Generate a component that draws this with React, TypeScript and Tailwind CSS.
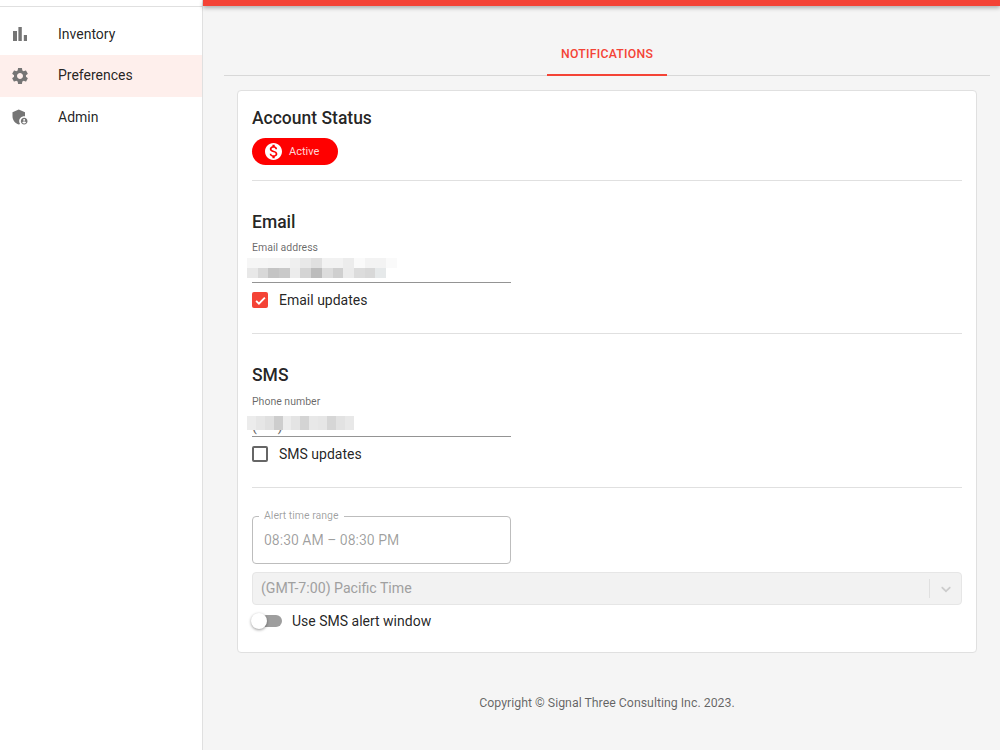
const gear = "M19.14 12.94c.04-.3.06-.61.06-.94 0-.32-.02-.64-.07-.94l2.03-1.58c.18-.14.23-.41.12-.61l-1.92-3.32c-.12-.22-.37-.29-.59-.22l-2.39.96c-.5-.38-1.03-.7-1.62-.94l-.36-2.54c-.04-.24-.24-.41-.48-.41h-3.84c-.24 0-.43.17-.47.41l-.36 2.54c-.59.24-1.13.57-1.62.94l-2.39-.96c-.22-.08-.47 0-.59.22L2.74 8.87c-.12.21-.08.47.12.61l2.03 1.58c-.05.3-.09.63-.09.94s.02.64.07.94l-2.03 1.58c-.18.14-.23.41-.12.61l1.92 3.32c.12.22.37.29.59.22l2.39-.96c.5.38 1.03.7 1.62.94l.36 2.54c.05.24.24.41.48.41h3.84c.24 0 .44-.17.47-.41l.36-2.54c.59-.24 1.13-.56 1.62-.94l2.39.96c.22.08.47 0 .59-.22l1.92-3.32c.12-.22.07-.47-.12-.61l-2.01-1.58zM12 15.6c-1.98 0-3.6-1.62-3.6-3.6s1.62-3.6 3.6-3.6 3.6 1.62 3.6 3.6-1.62 3.6-3.6 3.6z";
const chart = "M5 9h4v10H5zM10.4 5h3.4v14h-3.4zm5.4 8H19v6h-3.2z";
const admin = "M17 11c.34 0 .67.04 1 .09V6.27L10.5 3 3 6.27v4.91c0 4.54 3.2 8.79 7.5 9.82.55-.13 1.08-.32 1.6-.55-.69-.98-1.1-2.17-1.1-3.45 0-3.31 2.69-6 6-6zM17 13c-2.21 0-4 1.79-4 4s1.79 4 4 4 4-1.79 4-4-1.79-4-4-4zm0 1.38c.62 0 1.12.51 1.12 1.12s-.51 1.12-1.12 1.12-1.12-.51-1.12-1.12.5-1.12 1.12-1.12zm0 5.37c-.93 0-1.74-.46-2.24-1.17.05-.72 1.51-1.08 2.24-1.08s2.19.36 2.24 1.08c-.5.71-1.31 1.17-2.24 1.17z";
const money = "M12 2C6.48 2 2 6.48 2 12s4.48 10 10 10 10-4.48 10-10S17.52 2 12 2zm1.41 16.09V20h-2.67v-1.93c-1.71-.36-3.16-1.46-3.27-3.4h1.96c.1 1.05.82 1.87 2.65 1.87 1.96 0 2.4-.98 2.4-1.59 0-.83-.44-1.61-2.67-2.14-2.48-.6-4.18-1.62-4.18-3.67 0-1.72 1.39-2.84 3.11-3.21V4h2.67v1.95c1.86.45 2.79 1.86 2.85 3.39H14.3c-.05-1.11-.64-1.87-2.22-1.87-1.5 0-2.4.68-2.4 1.64 0 .84.65 1.39 2.67 1.91s4.18 1.39 4.18 3.91c-.01 1.83-1.38 2.83-3.12 3.16z";

function NavItem({ d, label, active, size }: { d: string; label: string; active?: boolean; size: string }) {
  return (
    <div className={`flex h-[41.6px] items-center pl-[8px] ${active ? "bg-[#feefec]" : ""}`}>
      <span className="flex h-[24px] w-[24px] items-center justify-center">
        <svg viewBox="0 0 24 24" className={`${size} fill-[#757575]`}><path d={d} /></svg>
      </span>
      <span className="ml-[26px] text-[14px] text-[rgba(0,0,0,0.87)]">{label}</span>
    </div>
  );
}

const emailPixels = [
  ["#f6f6f6", "#f6f6f6", "#f5f5f5", "#f5f5f5", "#efefef", "#e8e8e8", "#e0e0e0", "#f2f2f2", "#f2f2f2", "#ececec", "#fafafa", "#f3f3f3", "#f3f3f3", "#fafafa"],
  ["#e8e8e8", "#d8d8d8", "#c4c4c4", "#c9c9c9", "#ececec", "#d4d4d4", "#bcbcbc", "#dcdcdc", "#cfcfcf", "#ebebeb", "#dcdcdc", "#d8d8d8", "#e6e9ea", "#ffffff"],
];
const phonePixels = ["#ececec", "#e6e6e6", "#e0e0e0", "#cdcdcd", "#ececec", "#e4e4e4", "#d4d4d4", "#e8e8e8", "#e6e6e6", "#d6d6d6", "#e2e2e2", "#e8e8e8"];

function Pixels({ rows, h, cell, top }: { rows: string[][]; h: number; cell: number; top: string }) {
  return (
    <div className={`absolute left-[-5px] flex flex-col ${top}`}>
      {rows.map((row, i) => (
        <div key={i} className="flex">
          {row.map((c, j) => (
            <div key={j} style={{ backgroundColor: c, width: cell, height: h }} />
          ))}
        </div>
      ))}
    </div>
  );
}

export default function App() {
  return (
    <div className="flex h-[750px] w-[1000px] overflow-hidden bg-[#f5f5f5] font-['Roboto',sans-serif] text-[rgba(0,0,0,0.87)]">
      <aside className="w-[203px] shrink-0 border-r border-[#e0e0e0] bg-white">
        <div className="h-[7px] border-b border-[#e0e0e0]" />
        <nav className="pt-[6.4px]">
          <NavItem d={chart} label="Inventory" size="h-[24px] w-[24px]" />
          <NavItem d={gear} label="Preferences" active size="h-[20px] w-[20px]" />
          <NavItem d={admin} label="Admin" size="h-[20px] w-[20px]" />
        </nav>
      </aside>
      <div className="flex min-w-0 flex-1 flex-col">
        <div className="h-[6px] bg-[#f44336] shadow-[0_2px_4px_rgba(0,0,0,0.3)]" />
        <div className="mx-[10px] ml-[21px] flex h-[70px] justify-center border-b border-[#d8d8d8] pt-[24px]">
          <div className="relative top-px flex h-[45px] w-[120px] items-center justify-center border-b-2 border-[#f44336] pt-[4px] text-[12.25px] font-medium tracking-[0.25px] text-[#f44336]">
            NOTIFICATIONS
          </div>
        </div>
        <main className="ml-[34px] mr-[23px] mt-[14px] h-[563px] rounded-[4px] border border-[#e0e0e0] bg-white px-[14px]">
          <h2 className="mt-[17px] text-[17.5px] leading-[21px] font-medium">Account Status</h2>
          <div className="mt-[9px] flex h-[27px] w-[86px] items-center rounded-full bg-[#ff0000] pl-[13px] text-[11px] text-[#ffd6d6]">
            <svg viewBox="2 2 20 20" className="h-[17px] w-[17px] fill-white"><path d={money} /></svg>
            <span className="ml-[7px] pt-[2px]">Active</span>
          </div>
          <div className="mt-[15px] h-px bg-[#e0e0e0]" />

          <h2 className="mt-[31px] text-[17.5px] leading-[21px] font-medium">Email</h2>
          <div className="mt-[9px] text-[10.5px] leading-[12px] text-[rgba(0,0,0,0.6)]">Email address</div>
          <div className="relative h-[29px] w-[259px] border-b border-[#949494]">
            <Pixels rows={emailPixels} h={10} cell={10.7} top="top-[4px]" />
          </div>
          <div className="mt-[7px] flex h-[20px] items-center">
            <span className="flex h-[16px] w-[16px] items-center justify-center rounded-[2px] bg-[#f44336]">
              <svg viewBox="0 0 24 24" className="h-[15px] w-[15px] fill-none stroke-white stroke-[3]"><path d="M5 12.5l4.5 4.5L19 7.5" /></svg>
            </span>
            <span className="ml-[11px] text-[14px]">Email updates</span>
          </div>
          <div className="mt-[23px] h-px bg-[#e0e0e0]" />

          <h2 className="mt-[31px] text-[17.5px] leading-[21px] font-medium">SMS</h2>
          <div className="mt-[10px] text-[10.5px] leading-[12px] text-[rgba(0,0,0,0.6)]">Phone number</div>
          <div className="relative h-[29px] w-[259px] border-b border-[#949494]">
            <div className="absolute left-0 top-[8px] text-[14px] leading-[20px] text-[#666]">(&nbsp;&nbsp;&nbsp;&nbsp;&nbsp;&nbsp;)</div>
            <Pixels rows={[phonePixels]} h={14} cell={8.9} top="top-[8px]" />
          </div>
          <div className="mt-[7px] flex h-[20px] items-center">
            <span className="h-[16px] w-[16px] rounded-[2px] border-2 border-[#666]" />
            <span className="ml-[11px] text-[14px]">SMS updates</span>
          </div>
          <div className="mt-[23px] h-px bg-[#e0e0e0]" />

          <fieldset className="mt-[22px] h-[54px] w-[259px] rounded-[4px] border border-[#bdbdbd] px-[6px]">
            <legend className="px-[5px] text-[10.5px] leading-[12px] text-[rgba(0,0,0,0.38)]">Alert time range</legend>
            <div className="pl-[5px] pt-[8px] text-[14px] leading-[20px] text-[rgba(0,0,0,0.38)]">08:30 AM – 08:30 PM</div>
          </fieldset>
          <div className="mt-[8px] flex h-[33px] items-center justify-between rounded-[4px] border border-[#e6e6e6] bg-[#f2f2f2]">
            <span className="pl-[8px] text-[14.15px] text-[#a0a0a0]">(GMT-7:00) Pacific Time</span>
            <div className="flex items-center">
              <div className="h-[19px] w-px bg-[#e0e0e0]" />
              <svg viewBox="0 0 20 20" className="ml-[8px] mr-[7px] h-[16px] w-[16px] fill-[#cccccc]"><path d="M4.516 7.548c.436-.446 1.043-.481 1.576 0L10 11.295l3.908-3.747c.533-.481 1.141-.446 1.574 0 .436.445.408 1.197 0 1.615-.406.418-4.695 4.502-4.695 4.502a1.095 1.095 0 0 1-1.576 0S4.924 9.581 4.516 9.163c-.409-.418-.436-1.17 0-1.615z" /></svg>
            </div>
          </div>
          <div className="mt-[4px] flex h-[24px] items-center">
            <div className="relative h-[12px] w-[30px]">
              <div className="ml-[2px] h-[12px] w-[28px] rounded-full bg-[#9e9e9e]" />
              <div className="absolute left-[-1px] top-[-2px] h-[16px] w-[16px] rounded-full bg-white shadow-[0_1px_3px_rgba(0,0,0,0.4)]" />
            </div>
            <span className="ml-[10px] text-[14px]">Use SMS alert window</span>
          </div>
        </main>
        <footer className="ml-[21px] mr-[10px] mt-[42px] text-center text-[12.35px] leading-[16px] text-[rgba(0,0,0,0.6)]">
          Copyright © Signal Three Consulting Inc. 2023.
        </footer>
      </div>
    </div>
  );
}
